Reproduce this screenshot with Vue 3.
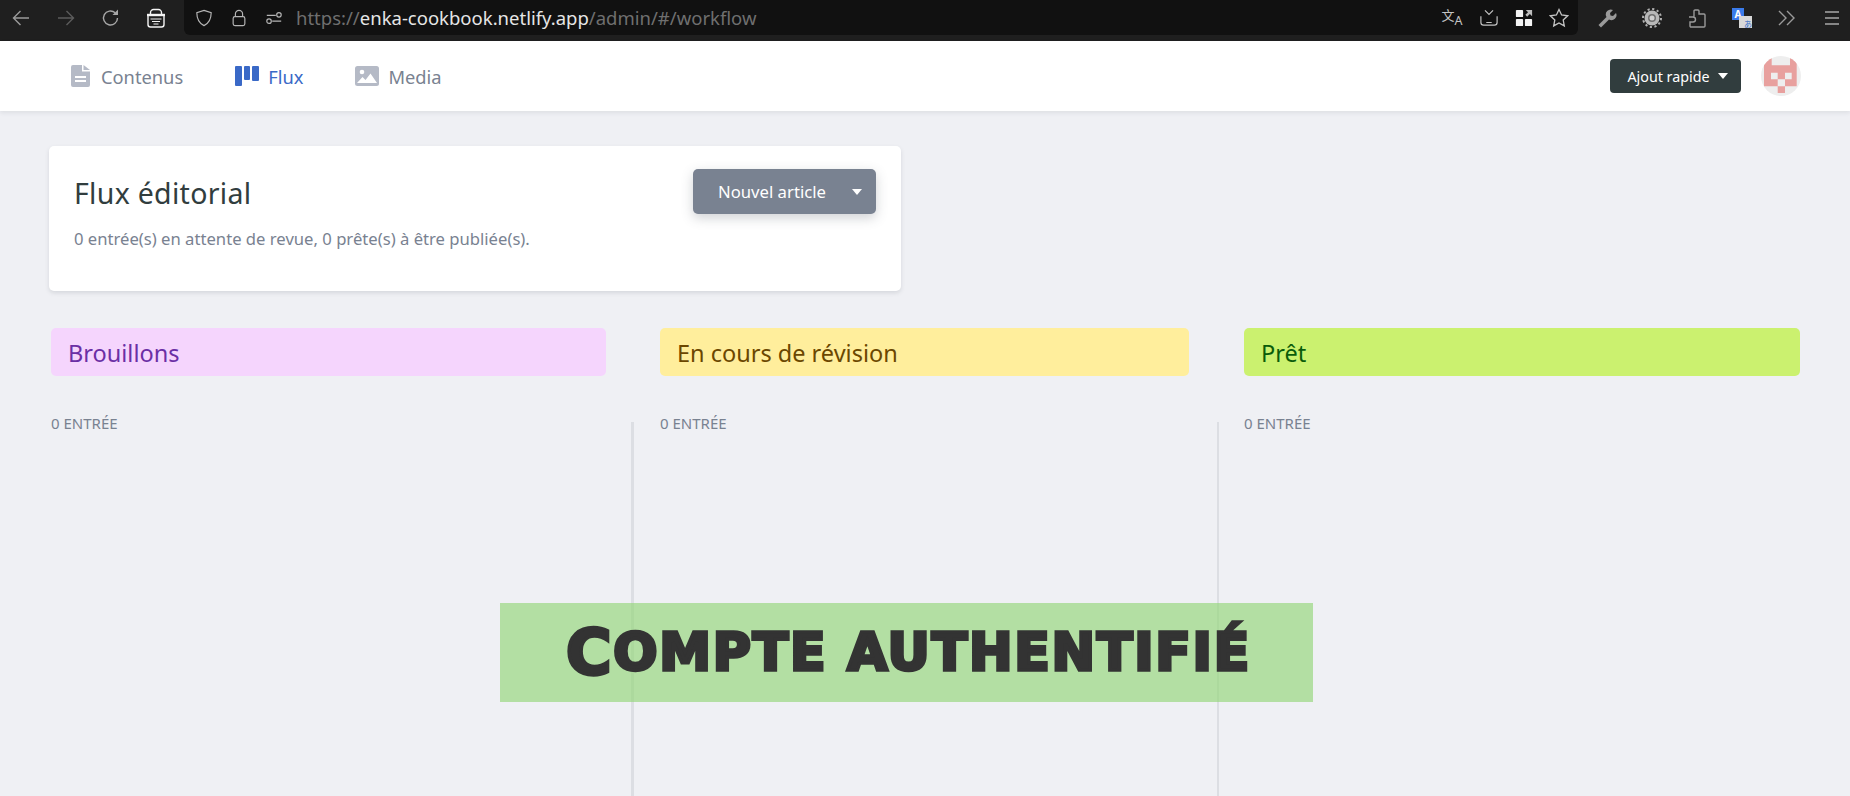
<template>
  <div class="page">
    <header class="browser-bar">
      <div class="browser-left">
        <svg class="b-icon" viewBox="0 0 20 20" fill="none" stroke="#9a9a9a" stroke-width="1.4"><path d="M18 10H2.500M9.500 3l-7 7 7 7"/></svg>
        <svg class="b-icon" viewBox="0 0 20 20" fill="none" stroke="#5c5c5c" stroke-width="1.4"><path d="M2 10h15.500M10.500 3l7 7-7 7"/></svg>
        <svg class="b-icon" viewBox="0 0 20 20" fill="none" stroke="#a8a8a8" stroke-width="1.4"><path d="M16.500 10a7 7 0 1 1-2.300-5.200"/><path d="M17 1.500V7h-5.500z" fill="#a8a8a8" stroke="none"/></svg>
        <svg class="b-icon" viewBox="0 0 20 20" fill="none" stroke="#f4f4f4" stroke-width="1.400"><path d="M4.500 7V4.500a3 3 0 0 1 3-3h5a3 3 0 0 1 3 3V7"/><path d="M1 7h18" stroke-width="2.400"/><path d="M2 8v8.500A2.500 2.500 0 0 0 4.500 19h11a2.500 2.500 0 0 0 2.500-2.500V8"/><path d="M4.500 11h11M6 13.500h8M7.500 16h5" stroke-width="1.200"/></svg>
      </div>
      <div class="url-box">
        <svg class="u-icon" viewBox="0 0 20 20" fill="none" stroke="#b5b5b5" stroke-width="1.300"><path d="M10 1.500l8 2.500c0 7-1.500 11.500-8 14.500C3.500 15.500 2 11 2 4z"/></svg>
        <svg class="u-icon" viewBox="0 0 20 20" fill="none" stroke="#b5b5b5" stroke-width="1.300"><rect x="3.500" y="8.500" width="13" height="10" rx="2"/><path d="M6 8.500V5.500a4 4 0 0 1 8 0v3"/></svg>
        <svg class="u-icon" viewBox="0 0 20 20" fill="none" stroke="#b5b5b5" stroke-width="1.300"><path d="M2 7h10M8 13.500h10"/><circle cx="15.500" cy="6.500" r="2.500"/><circle cx="4.500" cy="13.500" r="2.500"/></svg>
        <div class="url"><span class="dim-url">https://</span><span class="host">enka-cookbook.netlify.app</span><span class="dim-url">/admin/#/workflow</span></div>
        <div class="url-actions">
          <span class="t-glyph"><span class="t-zh">文</span><span class="t-a">A</span></span>
          <svg class="u-icon" viewBox="0 0 20 20" fill="none" stroke="#c4c4c4" stroke-width="1.300"><path d="M5.500 1.500L10 6l4.500-4.500M1 8v7a3 3 0 0 0 3 3h12a3 3 0 0 0 3-3V8M7 15h6"/></svg>
          <svg class="u-icon" viewBox="0 0 20 20" fill="#f4f4f4"><rect x="1" y="1" width="8" height="8" rx="1"/><rect x="1" y="11" width="8" height="8" rx="1"/><rect x="11" y="11" width="8" height="8" rx="1"/><path d="M12 1h7v7l-2.500-2.500-3 3-2-2 3-3z" fill="#bdbdbd"/></svg>
          <svg class="u-icon star" viewBox="0 0 20 20" fill="none" stroke="#c4c4c4" stroke-width="1.300"><path d="M10 1.500l2.600 5.500 6 .8-4.400 4.100 1.100 6L10 15l-5.300 2.900 1.100-6L1.400 7.800l6-.8z"/></svg>
        </div>
      </div>
      <div class="browser-right">
        <svg class="b-icon" viewBox="0 0 20 20" fill="#9a9a9a"><path d="M1.500 17l8-8a5 5 0 0 1 6.500-7l-3 3 .5 2.500 2.500.5 3-3a5 5 0 0 1-7 6.500l-8 8z"/></svg>
        <svg class="b-icon" viewBox="0 0 20 20"><circle cx="10" cy="10" r="9" fill="none" stroke="#b0b0b0" stroke-width="2" stroke-dasharray="2.200 2.500"/><circle cx="10" cy="10" r="7.500" fill="#b8b8b8"/><circle cx="10" cy="10" r="4" fill="#6f6f6f"/><circle cx="10" cy="10" r="2.500" fill="#cfcfcf"/></svg>
        <svg class="b-icon" viewBox="0 0 20 20" fill="none" stroke="#9a9a9a" stroke-width="1.400"><path d="M8 2h3a1 1 0 0 1 1 1v3h5a1 1 0 0 1 1 1v11a1 1 0 0 1-1 1H4a1 1 0 0 1-1-1v-4h3a2 2 0 0 0 0-5H2V9h5V3a1 1 0 0 1 1-1z"/></svg>
        <span class="g-trans"><span class="g-a">A</span><span class="g-ja">あ</span></span>
        <svg class="b-icon" viewBox="0 0 20 20" fill="none" stroke="#9a9a9a" stroke-width="1.400"><path d="M2 3l7 7-7 7M10 3l7 7-7 7"/></svg>
        <svg class="b-icon" viewBox="0 0 20 20" fill="none" stroke="#a8a8a8" stroke-width="1.500"><path d="M3 4h14M3 10h14M3 16h14"/></svg>
      </div>
    </header>

    <nav class="topnav">
      <div class="nav-links">
        <a class="nav-link first">
          <svg class="nav-icon doc" viewBox="0 0 19 22"><path d="M2 0h9v6.500h8V20a2 2 0 0 1-2 2H2a2 2 0 0 1-2-2V2a2 2 0 0 1 2-2z" fill="#b5bac6"/><path d="M12.500 0l6.500 5h-6.500z" fill="#b5bac6"/><path d="M4 12h11M4 16h11" stroke="#fff" stroke-width="2"/></svg>
          Contenus
        </a>
        <a class="nav-link active">
          <svg class="nav-icon board" viewBox="0 0 24 20" fill="#3a69c7"><rect width="7" height="20" rx="1"/><rect x="9" width="6" height="14" rx="1"/><rect x="17" width="7" height="15" rx="1"/></svg>
          Flux
        </a>
        <a class="nav-link">
          <svg class="nav-icon board" viewBox="0 0 24 20"><rect width="24" height="20" rx="2.500" fill="#b5bac6"/><circle cx="7" cy="6" r="2.300" fill="#fff"/><path d="M2 17l5.500-6 3 3 5-6.500L22 17z" fill="#fff"/></svg>
          Media
        </a>
      </div>
      <div class="nav-right">
        <button class="quick-add">Ajout rapide <span class="caret"></span></button>
        <div class="avatar">
          <svg viewBox="0 0 40 40" width="40" height="40">
            <path fill="#e8a09e" d="M3 0h7.700v9.300H29V0h6.700v30.300H24V37h-7.300v-6.700H3z"/>
            <path fill="#eeeeee" d="M10 16.700h6.700v6.600H10zM24 16.700h6.700v6.600H24zM16.700 23.300H24v7h-7.300z"/>
          </svg>
        </div>
      </div>
    </nav>

    <main class="content-area">
      <section class="summary-card">
        <div class="summary-text">
          <h1 class="summary-title">Flux éditorial</h1>
          <p class="summary-desc">0 entrée(s) en attente de revue, 0 prête(s) à être publiée(s).</p>
        </div>
        <button class="new-article">Nouvel article <span class="caret"></span></button>
      </section>

      <section class="board-columns">
        <div v-for="col in columns" :key="col.title" class="column" :class="col.cls">
          <div class="col-header">{{ col.title }}</div>
          <div class="col-count">0 ENTRÉE</div>
        </div>
      </section>
    </main>

    <div class="auth-banner"><span class="cap">C</span>ompte authentifié</div>
  </div>
</template>

<script setup>
const columns = [
  { title: 'Brouillons', cls: 'draft' },
  { title: 'En cours de révision', cls: 'review' },
  { title: 'Prêt', cls: 'ready' }
]
</script>

<style>
html, body {
  margin: 0;
  background: #eff0f4;
}
</style>

<style scoped>
.page {
  position: relative;
  height: 796px;
  overflow: hidden;
  background: #eff0f4;
  font-family: "Noto Sans", "Open Sans", sans-serif;
}

.browser-bar {
  height: 41px;
  background: #1f1f1f;
  display: flex;
  align-items: flex-start;
}

.browser-left {
  width: 184px;
  height: 35px;
  display: flex;
  align-items: center;
  padding-left: 11px;
  gap: 25px;
  box-sizing: border-box;
}

.b-icon {
  width: 20px;
  height: 20px;
  flex-shrink: 0;
}

.url-box {
  width: 1394px;
  height: 35px;
  background: #111;
  border-radius: 0 0 6px 6px;
  display: flex;
  align-items: center;
  padding: 0 9px 0 11px;
  box-sizing: border-box;
  gap: 17px;
}

.u-icon {
  width: 18px;
  height: 18px;
  flex-shrink: 0;
}

.u-icon.star {
  width: 20px;
  height: 20px;
}

.url {
  font-size: 18.5px;
  margin-left: -4px;
  white-space: nowrap;
}

.dim-url {
  color: #6f6f6f;
}

.host {
  color: #e6e6e6;
}

.url-actions {
  margin-left: auto;
  display: flex;
  align-items: center;
  gap: 16.5px;
}

.t-glyph {
  width: 22px;
  height: 20px;
  color: #c4c4c4;
  display: flex;
  margin-left: -2px;
}

.t-zh {
  font: 13px/14px "Noto Sans CJK SC", sans-serif;
}

.t-a {
  font-size: 12.5px;
  line-height: 14px;
  margin-top: 6px;
}

.browser-right {
  flex: 1;
  height: 35px;
  display: flex;
  align-items: center;
  gap: 25px;
  padding-left: 19px;
}

.g-trans {
  position: relative;
  width: 20px;
  height: 20px;
  display: block;
}

.g-a {
  position: absolute;
  left: 0;
  top: 0;
  width: 12px;
  height: 12px;
  background: #3a7bea;
  color: #fff;
  font-size: 10px;
  font-weight: 700;
  line-height: 12px;
  text-align: center;
}

.g-ja {
  position: absolute;
  right: 0;
  bottom: 0;
  width: 8px;
  height: 8px;
  padding: 4px 0 0 5px;
  background: #d8d8d8;
  color: #3a6fc7;
  font: 8px/8px "Noto Sans CJK JP", sans-serif;
  overflow: hidden;
}

.topnav {
  height: 70px;
  background: #fff;
  box-shadow: 0 2px 4px rgba(68, 74, 87, 0.1);
  display: flex;
  align-items: center;
  justify-content: space-between;
  padding: 0 49px 0 71px;
}

.nav-links {
  display: flex;
  align-items: center;
  gap: 52px;
}

.nav-link {
  display: flex;
  align-items: center;
  gap: 9px;
  color: #798291;
  font-size: 18.3px;
}

.nav-link.first {
  gap: 11px;
}

.nav-link.active {
  color: #3a69c7;
}

.nav-icon.doc {
  width: 19px;
  height: 22px;
}

.nav-icon.board {
  width: 24px;
  height: 20px;
}

.nav-right {
  display: flex;
  align-items: center;
  gap: 20px;
}

.quick-add {
  width: 131px;
  height: 34px;
  background: #313d3e;
  color: #fff;
  border: none;
  border-radius: 4px;
  font-family: inherit;
  font-size: 14.3px;
  display: flex;
  align-items: center;
  justify-content: center;
  gap: 8px;
  padding: 0 0 0 4px;
}

.avatar {
  width: 40px;
  height: 40px;
  border-radius: 50%;
  background: #eeeeee;
  overflow: hidden;
}

.avatar svg {
  display: block;
}

.caret {
  width: 0;
  height: 0;
  border-left: 5px solid transparent;
  border-right: 5px solid transparent;
  border-top: 6px solid #fff;
  display: inline-block;
}

.content-area {
  padding: 35px 50px 0 49px;
}

.summary-card {
  width: 852px;
  height: 145px;
  box-sizing: border-box;
  background: #fff;
  border-radius: 5px;
  box-shadow: 0 2px 4px rgba(68, 74, 87, 0.15);
  padding: 23px 25px 0 25px;
  display: flex;
  justify-content: space-between;
  align-items: flex-start;
}

.summary-title {
  margin: 6px 0 0;
  font-size: 28.5px;
  font-weight: 400;
  line-height: 36px;
  color: #313d3e;
  letter-spacing: 0.3px;
}

.summary-desc {
  margin: 16px 0 0;
  font-size: 16.65px;
  line-height: 24px;
  color: #798291;
}

.new-article {
  width: 183px;
  height: 45px;
  background: #798291;
  color: #fff;
  border: none;
  border-radius: 5px;
  box-shadow: 0 4px 12px rgba(68, 74, 87, 0.25);
  font-family: inherit;
  font-size: 16.7px;
  display: flex;
  align-items: center;
  gap: 26px;
  padding: 0 0 0 25px;
}

.board-columns {
  display: flex;
  margin-top: 37px;
  margin-left: 2px;
}

.column {
  box-sizing: border-box;
}

.column.draft {
  width: 580px;
  padding-right: 25px;
}

.column.review {
  width: 586px;
  padding: 0 28px 0 29px;
}

.column.ready {
  width: 583px;
  padding-left: 27px;
}

.col-header {
  height: 48px;
  border-radius: 5px;
  font-size: 23.5px;
  line-height: 50px;
  padding-left: 17px;
}

.draft .col-header {
  background: #f5d5fd;
  color: #6b2fa5;
}

.review .col-header {
  background: #ffee9c;
  color: #6b4700;
}

.ready .col-header {
  background: #cbf16f;
  color: #0a5c0a;
}

.col-count {
  position: relative;
  margin-top: 36px;
  font-size: 15px;
  line-height: 22px;
  color: #798291;
  height: 400px;
}

.review .col-count::before,
.ready .col-count::before {
  content: "";
  position: absolute;
  top: 10px;
  bottom: 0;
  background: #dcdee3;
}

.review .col-count::before {
  left: -29px;
  width: 3px;
}

.ready .col-count::before {
  left: -27px;
  width: 2px;
}

.auth-banner {
  position: absolute;
  left: 500px;
  top: 603px;
  width: 813px;
  height: 99px;
  padding-left: 4px;
  box-sizing: border-box;
  background: rgba(146, 214, 120, 0.65);
  color: #333;
  font-family: "DejaVu Sans", sans-serif;
  font-weight: 700;
  font-size: 52px;
  letter-spacing: 1.8px;
  text-transform: uppercase;
  -webkit-text-stroke: 3.5px #333;
  text-align: center;
  line-height: 99px;
  white-space: nowrap;
}

.cap {
  font-size: 62px;
  vertical-align: -4px;
  line-height: 0;
}
</style>
